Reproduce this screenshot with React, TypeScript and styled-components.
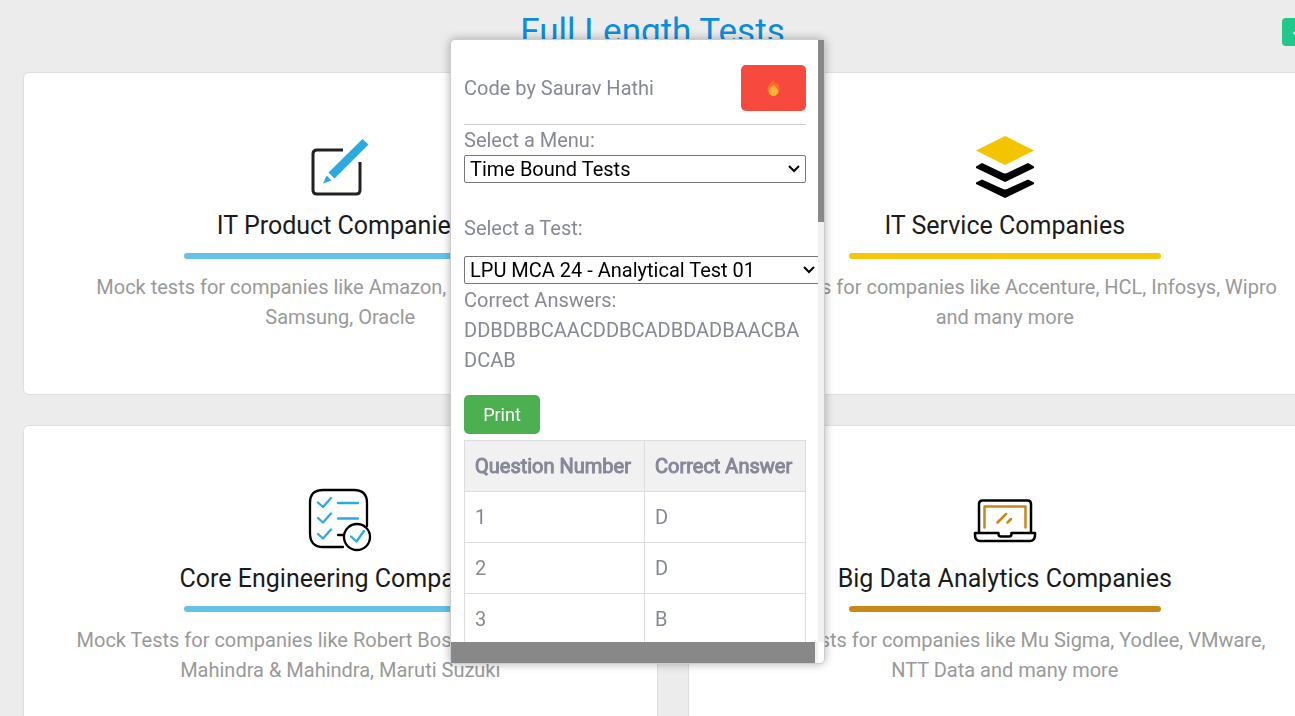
import React from "react";
import styled, { createGlobalStyle } from "styled-components";

const GlobalStyle = createGlobalStyle`
  *, *::before, *::after { box-sizing: border-box; }
  body {
    margin: 0;
    min-height: 100vh;
    overflow: hidden;
    background: #ececec;
    color: #868898;
    font: 400 20px/30px Roboto, "Liberation Sans", sans-serif;
  }
`;

const Page = styled.main`
  height: 100vh;
  overflow: hidden;
  padding-left: 23px;
`;

const PageHeader = styled.header`
  display: flex;
  align-items: center;
  height: 72px;
  padding-bottom: 8px;
  margin-right: -28px;
`;

const PageTitle = styled.h1`
  flex: 1;
  margin: 0;
  color: #0a8ddf;
  font-size: 35px;
  line-height: 44px;
  font-weight: 400;
  text-align: center;
`;

const BackButton = styled.button`
  display: flex;
  align-items: center;
  justify-content: center;
  width: 41px;
  height: 28px;
  padding: 0;
  border: 0;
  border-radius: 4px;
  background: #1ec98b;
`;

const CardGrid = styled.div`
  display: grid;
  grid-template-columns: 1fr 1fr;
  gap: 30px;
  margin-right: -27px;
`;

const Card = styled.article`
  display: flex;
  flex-direction: column;
  align-items: center;
  padding: 62px 24px;
  border: 1px solid #dedede;
  border-radius: 6px;
  background: #fff;
  text-align: center;
`;

const CardIcon = styled.svg`
  width: 64px;
  height: 64px;
  fill: none;
`;

const CardTitle = styled.h2`
  margin: 12px 0;
  color: #1b1b1b;
  font-size: 25px;
  line-height: 30px;
  font-weight: 400;
`;

const Rule = styled.div<{ $color: string }>`
  width: 312px;
  height: 6px;
  border-radius: 3px;
  background: ${(p) => p.$color};
`;

const CardText = styled.p`
  margin: 13px 0 0;
  color: #999;
  white-space: pre-line;
`;

const Panel = styled.aside`
  position: fixed;
  top: 39px;
  left: 450px;
  display: grid;
  grid-template-columns: 367px 6px;
  grid-template-rows: 602px 21px;
  border: 1px solid #ccc;
  border-radius: 5px;
  background: #fff;
  box-shadow: 0 0 10px rgba(0, 0, 0, 0.3);
`;

const PanelBody = styled.div`
  overflow: hidden;
  padding: 25px 12px 0 13px;
`;

const PanelHeader = styled.div`
  display: flex;
  align-items: center;
  justify-content: space-between;
  padding-bottom: 13px;
  border-bottom: 1px solid #ccc;
`;

const FireButton = styled.button`
  display: flex;
  align-items: center;
  justify-content: center;
  width: 65px;
  height: 46px;
  padding: 0;
  border: 0;
  border-radius: 5px;
  background: #f7493e;
`;

const FieldLabel = styled.label`
  display: block;
`;

const SelectBox = styled.div<{ $width: string }>`
  display: grid;
  align-items: center;
  width: ${(p) => p.$width};

  > * {
    grid-area: 1 / 1;
  }
`;

const Select = styled.select`
  appearance: none;
  width: 100%;
  height: 28px;
  padding: 0 24px 0 5px;
  border: 1px solid #767676;
  border-radius: 2px;
  background: #fff;
  color: #000;
  font: inherit;
  line-height: 26px;
`;

const Chevron = styled.svg`
  justify-self: end;
  width: 12px;
  height: 8px;
  margin-right: 6px;
  fill: none;
  stroke: #000;
  stroke-width: 2;
  pointer-events: none;
`;

const TestField = styled.div`
  display: grid;
  gap: 13px;
  margin-top: 30px;
`;

const Answers = styled.p`
  margin: 1px 0 20px;
  overflow-wrap: anywhere;
`;

const PrintButton = styled.button`
  display: block;
  width: 76px;
  height: 39px;
  margin-bottom: 6px;
  padding: 0;
  border: 0;
  border-radius: 5px;
  background: #4caf50;
  color: #fff;
  font: 400 18px/27px Roboto, sans-serif;
`;

const AnswerTable = styled.table`
  width: 100%;
  border-collapse: collapse;
  table-layout: fixed;
`;

const HeadCell = styled.th<{ $width: string }>`
  width: ${(p) => p.$width};
  padding: 10px;
  border: 1px solid #ddd;
  background: #f1f1f1;
  font-weight: 400;
  -webkit-text-stroke: 1px currentColor;
  text-align: left;
  white-space: nowrap;
`;

const Cell = styled.td`
  padding: 10px;
  border: 1px solid #ddd;
`;

const VerticalTrack = styled.div`
  background: #f1f1f1;
`;

const VerticalThumb = styled.div`
  height: 182px;
  background: #888;
`;

const HorizontalTrack = styled.div`
  background: #f1f1f1;
`;

const HorizontalThumb = styled.div`
  width: 364px;
  height: 100%;
  background: #888;
`;

const PencilIcon = () => (
  <CardIcon viewBox="0 0 64 64" aria-hidden="true">
    <path d="M35 15H9q-4 0-4 4v36q0 4 4 4h39q4 0 4-4V27" stroke="#222" strokeWidth="3" />
    <path d="M54.500 4 60.500 9.500 26.500 43.500 20.500 37.500Z" fill="#29abe2" />
    <path d="M18.500 40.500 23.500 45.500 15 48.500Z" fill="#29abe2" />
  </CardIcon>
);

const LayersIcon = () => (
  <CardIcon viewBox="0 0 64 64" aria-hidden="true">
    <path d="M32 1 61 15.500 32 30 3 15.500Z" fill="#f5c400" />
    <path d="M3 31.500 9 28 30 38q2 .8 4 0L55 28 61 31.500V33L32 47 3 33Z" fill="#000" />
    <path d="M3 47.500 9 44.500 30 54q2 .8 4 0L55 44.500 61 47.500V49L32 63 3 49Z" fill="#000" />
  </CardIcon>
);

const ChecklistIcon = () => (
  <CardIcon viewBox="0 0 64 64" strokeWidth="2.300" strokeLinecap="round" strokeLinejoin="round" aria-hidden="true">
    <path d="M35 59H15Q2 59 2 45V15Q2 2 15 2H46Q59 2 59 15V38" stroke="#000" />
    <path d="M30 47h6" stroke="#000" />
    <path d="m10 14.500 5 4.500 8-9M30 15h20M10 30l5 4.500 8-9M30 30.500h20M10 46l5 4.500 8-9" stroke="#29abe2" />
    <circle cx="49" cy="49" r="13" stroke="#000" fill="#fff" />
    <path d="m43 48.500 5.500 5L56 43" stroke="#29abe2" />
  </CardIcon>
);

const LaptopIcon = () => (
  <CardIcon viewBox="0 0 64 64" strokeWidth="2.500" strokeLinecap="round" strokeLinejoin="round" aria-hidden="true">
    <path d="M6 44V16q0-3.500 3.500-3.500h45q3.500 0 3.500 3.500V44" stroke="#000" />
    <path d="M2 45H25.500v1q0 2.500 2.500 2.500h8q2.500 0 2.500-2.500V45H62v2q0 6-5 6H7q-5 0-5-6Z" stroke="#000" />
    <path d="M11.500 39.500V18.500H52.500V39.500M24.500 34.500 33 26M34.500 34.500 38 31" stroke="#c98718" />
  </CardIcon>
);

const cards = [
  {
    title: "IT Product Companies",
    color: "#64c2e8",
    text: "Mock tests for companies like Amazon, Skype, Flipkart,\nSamsung, Oracle",
    Icon: PencilIcon,
  },
  {
    title: "IT Service Companies",
    color: "#f5c60c",
    text: "Mock tests for companies like Accenture, HCL, Infosys, Wipro\nand many more",
    Icon: LayersIcon,
  },
  {
    title: "Core Engineering Companies",
    color: "#64c2e8",
    text: "Mock Tests for companies like Robert Bosch, Volvo Motors,\nMahindra & Mahindra, Maruti Suzuki",
    Icon: ChecklistIcon,
  },
  {
    title: "Big Data Analytics Companies",
    color: "#c98718",
    text: "Mock Tests for companies like Mu Sigma, Yodlee, VMware,\nNTT Data and many more",
    Icon: LaptopIcon,
  },
];

const answers = "DDBDBBCAACDDBCADBDADBAACBADCAB";

type SelectFieldProps = { id: string; width: string; option: string };

const SelectField = ({ id, width, option }: SelectFieldProps) => (
  <SelectBox $width={width}>
    <Select id={id}>
      <option>{option}</option>
    </Select>
    <Chevron viewBox="0 0 12 8" aria-hidden="true">
      <path d="m1 1 5 5 5-5" />
    </Chevron>
  </SelectBox>
);

export default function App() {
  return (
    <>
      <GlobalStyle />
      <Page>
        <PageHeader>
          <PageTitle>Full Length Tests</PageTitle>
          <BackButton aria-label="Back">
            <svg width="20" height="16" viewBox="0 0 20 16" fill="none" stroke="#fff" strokeWidth="3" aria-hidden="true">
              <path d="M18 9H2M8 3 2 9l6 6" />
            </svg>
          </BackButton>
        </PageHeader>
        <CardGrid>
          {cards.map(({ title, color, text, Icon }) => (
            <Card key={title}>
              <Icon />
              <CardTitle>{title}</CardTitle>
              <Rule $color={color} />
              <CardText>{text}</CardText>
            </Card>
          ))}
        </CardGrid>
      </Page>
      <Panel>
        <PanelBody>
          <PanelHeader>
            <span>Code by Saurav Hathi</span>
            <FireButton aria-label="Run">
              <svg width="13" height="18" viewBox="0 0 14 18" aria-hidden="true">
                <path d="M7 0c.4 2.600 2 3.600 3 5 .5-.5.700-1 .8-1.700C12.500 5.500 13.500 8 13.500 11c0 4-2.700 6.500-6.500 6.500S.5 15 .5 11c0-2.500.800-4.500 1.800-6 .2 1 .5 1.500 1 2C3.500 4 5 2 7 0Z" fill="#ff6d2b" />
                <path d="M7.200 5.500c.3 1.800 4.800 3.500 4.800 7 0 3-2 5-5 5s-5-2-5-5c0-2 1-3.200 2.400-4.200.9-.9 2.300-1.500 2.800-2.800Z" fill="#ffb133" />
              </svg>
            </FireButton>
          </PanelHeader>
          <FieldLabel htmlFor="menu">Select a Menu:</FieldLabel>
          <SelectField id="menu" width="100%" option="Time Bound Tests" />
          <TestField>
            <FieldLabel htmlFor="test">Select a Test:</FieldLabel>
            <SelectField id="test" width="357px" option="LPU MCA 24 - Analytical Test 01" />
          </TestField>
          <Answers>
            Correct Answers:
            <br />
            {answers}
          </Answers>
          <PrintButton>Print</PrintButton>
          <AnswerTable>
            <thead>
              <tr>
                <HeadCell $width="180px">Question Number</HeadCell>
                <HeadCell $width="auto">Correct Answer</HeadCell>
              </tr>
            </thead>
            <tbody>
              {answers.slice(0, 3).split("").map((answer, i) => (
                <tr key={i}>
                  <Cell>{i + 1}</Cell>
                  <Cell>{answer}</Cell>
                </tr>
              ))}
            </tbody>
          </AnswerTable>
        </PanelBody>
        <VerticalTrack>
          <VerticalThumb />
        </VerticalTrack>
        <HorizontalTrack>
          <HorizontalThumb />
        </HorizontalTrack>
      </Panel>
    </>
  );
}
